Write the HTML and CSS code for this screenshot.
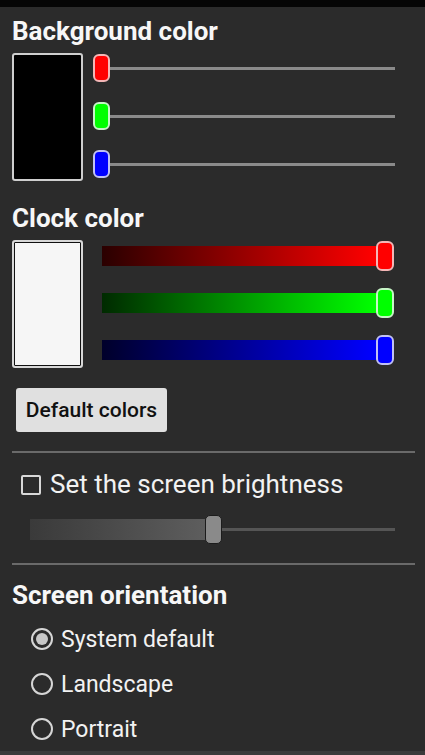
FILE: index.html
```html
<!DOCTYPE html>
<html>
<head>
<meta charset="utf-8">
<link rel="stylesheet" href="styles.css">
</head>
<body>
<div class="statusbar"></div>
<main class="page">
  <h2 class="heading h-bg">Background color</h2>
  <div class="color-row">
    <div class="swatch swatch-black"></div>
    <div class="bg-sliders">
      <div class="bg-slider"><span class="thumb thumb-red"></span><span class="line"></span></div>
      <div class="bg-slider"><span class="thumb thumb-green"></span><span class="line"></span></div>
      <div class="bg-slider"><span class="thumb thumb-blue"></span><span class="line"></span></div>
    </div>
  </div>

  <h2 class="heading h-clock">Clock color</h2>
  <div class="color-row">
    <div class="swatch swatch-white"></div>
    <div class="clock-sliders">
      <div class="clock-slider"><span class="bar bar-red"></span><span class="thumb big thumb-red"></span></div>
      <div class="clock-slider"><span class="bar bar-green"></span><span class="thumb big thumb-green"></span></div>
      <div class="clock-slider"><span class="bar bar-blue"></span><span class="thumb big thumb-blue"></span></div>
    </div>
  </div>

  <button class="btn">Default colors</button>

  <hr class="divider div1">

  <label class="check-row"><span class="checkbox"></span><span class="check-label">Set the screen brightness</span></label>
  <div class="bright">
    <span class="bright-fill"></span><span class="bright-thumb"></span><span class="bright-line"></span>
  </div>

  <hr class="divider div2">

  <h2 class="heading h-orient">Screen orientation</h2>
  <ul class="radios">
    <li class="radio-row"><span class="radio checked"></span>System default</li>
    <li class="radio-row"><span class="radio"></span>Landscape</li>
    <li class="radio-row"><span class="radio"></span>Portrait</li>
  </ul>
</main>
<div class="bottombar"></div>
</body>
</html>
```

FILE: styles.css
```css
html, body {
  margin: 0;
  padding: 0;
  height: 100%;
  background: #2b2b2b;
  font-family: Roboto, "Liberation Sans", sans-serif;
  color: #f2f2f2;
  overflow: hidden;
}

.statusbar {
  height: 7px;
  background: #050505;
}

.page {
  height: 744px;
  display: flex;
  flex-direction: column;
}

.heading {
  margin: 0;
  padding-left: 12px;
  font-size: 26px;
  font-weight: bold;
  line-height: 30px;
  height: 30px;
  color: #f7f7f7;
}

.h-bg { margin-top: 9px; }
.h-clock { margin-top: 22px; }
.h-orient { margin-top: 15px; }

.color-row {
  display: flex;
  margin-top: 7px;
  padding-left: 12px;
}

.swatch {
  width: 71px;
  height: 128px;
  box-sizing: border-box;
  border-radius: 3px;
}

.swatch-black {
  background: #000;
  border: 2px solid #cfcfcf;
}

.swatch-white {
  background: #f6f6f6;
  border: 2px solid #d8d8d8;
  box-shadow: inset 0 0 0 1px #111;
}

.bg-sliders {
  display: flex;
  flex-direction: column;
  gap: 20px;
  padding-left: 10px;
  padding-top: 1px;
}

.bg-slider {
  display: flex;
  align-items: center;
  height: 28px;
}

.thumb {
  display: block;
  width: 17px;
  height: 28px;
  box-sizing: border-box;
  border-radius: 6px;
  border: 2px solid #f0c8c8;
  flex: none;
}

.thumb.big { height: 30px; width: 18px; }

.thumb-red { background: #ff0000; border-color: #f4b6b6; }
.thumb-green { background: #00ff00; border-color: #c6f5c6; }
.thumb-blue { background: #0000ff; border-color: #c0c0f4; }

.line {
  display: block;
  width: 285px;
  height: 3px;
  background: #8a8a8a;
}

.clock-sliders {
  display: flex;
  flex-direction: column;
  gap: 17px;
  padding-top: 1px;
  padding-left: 19px;
}

.clock-slider {
  display: flex;
  align-items: center;
  height: 30px;
}

.bar {
  display: block;
  width: 274px;
  height: 20px;
}

.bar-red { background: linear-gradient(to right, #2a0000, #ff0000); }
.bar-green { background: linear-gradient(to right, #002a00, #00ff00); }
.bar-blue { background: linear-gradient(to right, #00002a, #0000ff); }

.btn {
  align-self: flex-start;
  margin: 20px 0 0 16px;
  width: 151px;
  height: 44px;
  border: none;
  border-radius: 3px;
  background: #e0e0e0;
  color: #111;
  font-family: Roboto, "Liberation Sans", sans-serif;
  font-size: 21px;
  font-weight: 500;
  padding: 0;
}

.divider {
  border: none;
  height: 2px;
  background: #6a6a6a;
  margin: 0 10px 0 12px;
}

.div1 { margin-top: 19px; }
.div2 { margin-top: 19px; }

.check-row {
  display: flex;
  align-items: center;
  margin-top: 16px;
  padding-left: 21px;
  height: 30px;
  font-size: 26px;
  line-height: 30px;
  color: #f2f2f2;
}

.checkbox {
  width: 20px;
  height: 20px;
  box-sizing: border-box;
  border: 2px solid #d8d8d8;
  border-radius: 2px;
  margin-right: 9px;
  margin-top: 2px;
}

.bright {
  display: flex;
  align-items: center;
  margin-top: 15px;
  padding-left: 30px;
  height: 30px;
}

.bright-fill {
  display: block;
  width: 178px;
  height: 21px;
  background: linear-gradient(to right, #3a3a3a, #5e5e5e);
}

.bright-thumb {
  display: block;
  width: 17px;
  height: 29px;
  box-sizing: border-box;
  border-radius: 5px;
  background: #8a8a8a;
  border: 1px solid #1c1c1c;
  margin-left: -3px;
}

.bright-line {
  display: block;
  width: 173px;
  height: 3px;
  background: #555;
}

.radios {
  list-style: none;
  margin: 14px 0 0 0;
  padding: 0 0 0 31px;
  display: flex;
  flex-direction: column;
  gap: 15px;
}

.radio-row {
  display: flex;
  align-items: center;
  height: 30px;
  font-size: 23px;
  color: #f2f2f2;
}

.radio {
  width: 22px;
  height: 22px;
  box-sizing: border-box;
  border: 2px solid #d6d6d6;
  border-radius: 50%;
  margin-right: 8px;
  position: relative;
}

.radio.checked::after {
  content: "";
  position: absolute;
  left: 3px;
  top: 3px;
  width: 12px;
  height: 12px;
  border-radius: 50%;
  background: #c8c8c8;
}

.bottombar {
  height: 4px;
  background: #3a3a3a;
}
```
